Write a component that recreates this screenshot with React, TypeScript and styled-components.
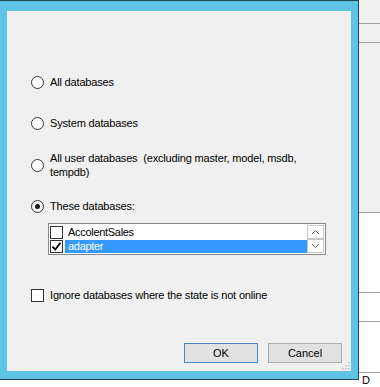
import React from "react";
import styled, { createGlobalStyle } from "styled-components";

const Global = createGlobalStyle`
  html, body { margin: 0; padding: 0; background: #ffffff; }
  body { font-family: "Liberation Sans", Arial, sans-serif; font-size: 11px; letter-spacing: -0.17px; color: #000; }
  * { box-sizing: border-box; }
`;

const Page = styled.div`
  display: flex;
  align-items: flex-start;
  width: 380px;
  height: 387px;
  overflow: hidden;
`;

const Frame = styled.div`
  width: 359px;
  height: 380px;
  flex: none;
  background: #5ec4e6;
  border-top: 1px solid #24465a;
  border-right: 1px solid #24465a;
  border-bottom: 1px solid #24465a;
  padding: 10px 7px 8px 7px;
`;

const Panel = styled.div`
  position: relative;
  width: 344px;
  height: 360px;
  background: #f0f0f0;
  display: flex;
  flex-direction: column;
  padding-left: 24px;
`;

const OptionRow = styled.div<{ $top: number }>`
  display: flex;
  align-items: center;
  gap: 6px;
  margin-top: ${(p) => p.$top}px;
  line-height: 14px;
  white-space: pre;
`;

const Radio = styled.span<{ $on?: boolean }>`
  width: 13px;
  height: 13px;
  flex: none;
  border-radius: 50%;
  border: 1px solid #333;
  background: #fff;
  display: flex;
  align-items: center;
  justify-content: center;
  &::after {
    content: "";
    display: ${(p) => (p.$on ? "block" : "none")};
    width: 5px;
    height: 5px;
    border-radius: 50%;
    background: #1a1a1a;
  }
`;

const Box = styled.span`
  width: 13px;
  height: 13px;
  flex: none;
  border: 1px solid #333;
  background: #fff;
  display: flex;
  align-items: center;
  justify-content: center;
`;

const List = styled.div`
  margin-top: 10px;
  margin-left: 17px;
  width: 278px;
  height: 32px;
  border: 1px solid #828790;
  background: #fff;
  display: flex;
`;

const Items = styled.div`
  flex: 1;
  display: flex;
  flex-direction: column;
  padding-top: 1px;
`;

const Item = styled.div`
  display: flex;
  align-items: center;
  height: 15px;
  padding-left: 1px;
  gap: 2px;
`;

const ItemText = styled.span<{ $sel?: boolean }>`
  flex: 1;
  height: 13px;
  line-height: 13px;
  padding-left: 3px;
  letter-spacing: -0.3px;
  background: ${(p) => (p.$sel ? "#3399ff" : "transparent")};
  color: ${(p) => (p.$sel ? "#fff" : "#000")};
`;

const Scroll = styled.div`
  width: 18px;
  display: flex;
  flex-direction: column;
  padding: 1px 1px 1px 0;
`;

const Arrow = styled.div`
  flex: 1;
  border: 1px solid #c6c6c6;
  background: #fff;
  display: flex;
  align-items: center;
  justify-content: center;
`;

const Buttons = styled.div`
  margin-top: 41px;
  display: flex;
  justify-content: flex-end;
  gap: 10px;
  padding-right: 9px;
`;

const Button = styled.button<{ $def?: boolean }>`
  width: 74px;
  height: 20px;
  font-family: "Liberation Sans", Arial, sans-serif;
  font-size: 11px;
  color: #000;
  background: #e1e1e1;
  border: 1px solid ${(p) => (p.$def ? "#4a86c2" : "#adadad")};
  padding: 0;
`;

const Grip = styled.svg`
  position: absolute;
  right: 1px;
  bottom: 1px;
`;

const Strip = styled.div`
  flex: 1;
  display: flex;
  flex-direction: column;
  height: 387px;
`;

const Seg = styled.div<{ $h: number; $bg: string; $line?: boolean }>`
  height: ${(p) => p.$h}px;
  flex: none;
  background: ${(p) => p.$bg};
  border-bottom: ${(p) => (p.$line ? "1px solid #a0a0a0" : "none")};
  font-size: 11px;
  line-height: 11px;
  padding: 2px 0 0 3px;
  overflow: hidden;
`;

const Check = () => (
  <svg width="11" height="11" viewBox="0 0 11 11">
    <path d="M1.5 5.5 L4.2 8.5 L9.5 1.8" fill="none" stroke="#000" strokeWidth="1.8" />
  </svg>
);

const Chevron = ({ up }: { up?: boolean }) => (
  <svg width="9" height="6" viewBox="0 0 9 6">
    <path d={up ? "M1 5 L4.5 1.5 L8 5" : "M1 1 L4.5 4.5 L8 1"} fill="none" stroke="#606060" strokeWidth="1" />
  </svg>
);

export default function App() {
  return (
    <>
      <Global />
      <Page>
        <Frame>
          <Panel>
            <OptionRow $top={64}>
              <Radio />
              <span>All databases</span>
            </OptionRow>
            <OptionRow $top={27}>
              <Radio />
              <span>System databases</span>
            </OptionRow>
            <OptionRow $top={21}>
              <Radio />
              <span>
                {"All user databases  (excluding master, model, msdb,"}
                <br />
                {"tempdb)"}
              </span>
            </OptionRow>
            <OptionRow $top={20}>
              <Radio $on />
              <span>These databases:</span>
            </OptionRow>
            <List>
              <Items>
                <Item>
                  <Box />
                  <ItemText>AccolentSales</ItemText>
                </Item>
                <Item>
                  <Box>
                    <Check />
                  </Box>
                  <ItemText $sel>adapter</ItemText>
                </Item>
              </Items>
              <Scroll>
                <Arrow>
                  <Chevron up />
                </Arrow>
                <Arrow>
                  <Chevron />
                </Arrow>
              </Scroll>
            </List>
            <OptionRow $top={33}>
              <Box />
              <span>Ignore databases where the state is not online</span>
            </OptionRow>
            <Buttons>
              <Button $def>OK</Button>
              <Button>Cancel</Button>
            </Buttons>
            <Grip width="9" height="9" viewBox="0 0 9 9">
              {[
                [7, 1],
                [7, 4],
                [4, 4],
                [7, 7],
                [4, 7],
                [1, 7],
              ].map(([x, y]) => (
                <rect key={`${x}-${y}`} x={x} y={y} width="1.5" height="1.5" fill="#b8b8b8" />
              ))}
            </Grip>
          </Panel>
        </Frame>
        <Strip>
          <Seg $h={24} $bg="#f0f0f0" $line />
          <Seg $h={19} $bg="#f0f0f0" $line />
          <Seg $h={170} $bg="#f0f0f0" $line />
          <Seg $h={80} $bg="#ffffff" $line />
          <Seg $h={29} $bg="#ffffff" $line />
          <Seg $h={51} $bg="#ffffff" $line />
          <Seg $h={14} $bg="#ffffff">
            D
          </Seg>
        </Strip>
      </Page>
    </>
  );
}
